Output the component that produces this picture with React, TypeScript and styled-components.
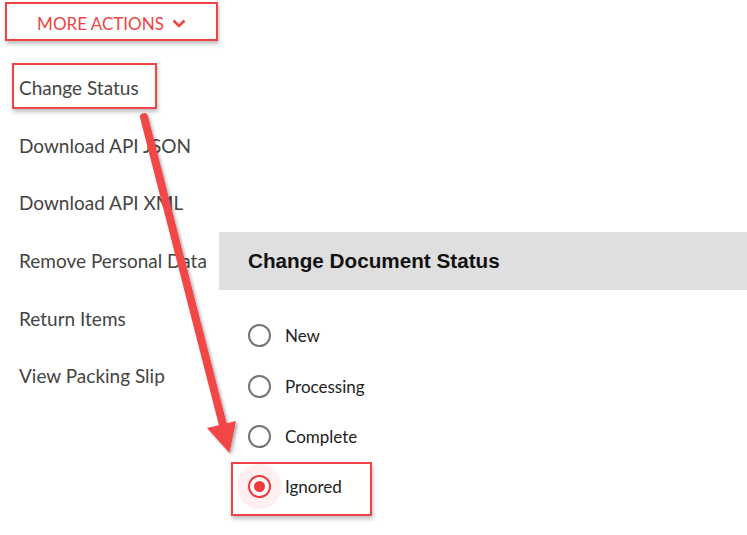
import React from "react";
import styled, { createGlobalStyle } from "styled-components";

const RED = "#f04343";

const Global = createGlobalStyle`
  html, body { margin: 0; padding: 0; background: #fff; }
  body { font-family: Lato, "Noto Sans", sans-serif; }
`;

const Page = styled.div`
  position: relative;
  width: 747px;
  height: 535px;
  overflow: hidden;
  display: flex;
  background: #fff;
`;

const LeftColumn = styled.div`
  width: 219px;
  flex: none;
  display: flex;
  flex-direction: column;
  padding-top: 2px;
`;

const MoreButton = styled.button`
  margin-left: 5px;
  width: 213px;
  height: 39px;
  box-sizing: border-box;
  border: 2px solid ${RED};
  background: #fff;
  box-shadow: 1px 3px 4px rgba(0, 0, 0, 0.25);
  display: flex;
  align-items: center;
  justify-content: center;
  gap: 8px;
  padding: 4px 0 0 0;
  font-family: Lato, sans-serif;
  font-size: 17px;
  color: ${RED};
  cursor: pointer;
`;

const Menu = styled.ul`
  list-style: none;
  margin: 22px 0 0 0;
  padding: 0;
  display: flex;
  flex-direction: column;
  gap: 11.7px;
`;

const MenuItem = styled.li<{ $highlight?: boolean }>`
  margin-left: 12px;
  width: fit-content;
  height: 46px;
  box-sizing: border-box;
  display: flex;
  align-items: center;
  padding: 3px 16px 0 5px;
  border: 2px solid ${(p) => (p.$highlight ? RED : "transparent")};
  box-shadow: ${(p) => (p.$highlight ? "1px 3px 4px rgba(0,0,0,0.25)" : "none")};
  font-size: 19px;
  color: #444;
  white-space: nowrap;
`;

const RightColumn = styled.div`
  flex: 1;
  padding-top: 232px;
  display: flex;
  flex-direction: column;
`;

const DialogHeader = styled.div`
  height: 58px;
  background: #dfdfdf;
  display: flex;
  align-items: center;
  padding-left: 29px;
`;

const DialogTitle = styled.h2`
  margin: 0;
  font-family: "Liberation Sans", Arial, sans-serif;
  font-weight: bold;
  font-size: 20.7px;
  color: #111;
`;

const RadioList = styled.div`
  display: flex;
  flex-direction: column;
  padding-top: 20.7px;
`;

const RadioRow = styled.label<{ $highlight?: boolean }>`
  position: relative;
  height: 50.3px;
  display: flex;
  align-items: center;
  gap: 14px;
  padding-left: 29px;
  font-size: 17px;
  color: #222;

  ${(p) =>
    p.$highlight &&
    `
    &::after {
      content: "";
      position: absolute;
      left: 12px;
      top: 0;
      width: 141px;
      height: 54px;
      box-sizing: border-box;
      border: 2px solid ${RED};
      box-shadow: 1px 3px 4px rgba(0,0,0,0.25);
      pointer-events: none;
    }
  `}
`;

const RadioCircle = styled.span<{ $checked?: boolean }>`
  width: 23px;
  height: 23px;
  box-sizing: border-box;
  border-radius: 50%;
  border: 2px solid ${(p) => (p.$checked ? "#ef3b3b" : "#757575")};
  display: flex;
  align-items: center;
  justify-content: center;
  flex: none;
  box-shadow: ${(p) => (p.$checked ? "0 0 0 11px rgba(240, 60, 60, 0.08)" : "none")};

  &::before {
    content: "";
    width: 11px;
    height: 11px;
    border-radius: 50%;
    background: ${(p) => (p.$checked ? "#ef3b3b" : "transparent")};
  }
`;

const ArrowLayer = styled.svg`
  position: absolute;
  left: 0;
  top: 0;
  pointer-events: none;
`;

const Chevron = () => (
  <svg width="14" height="9" viewBox="0 0 14 9">
    <polyline points="1.5,1.5 7,7 12.5,1.5" fill="none" stroke={RED} strokeWidth="2.6" />
  </svg>
);

const menuItems = [
  "Change Status",
  "Download API JSON",
  "Download API XML",
  "Remove Personal Data",
  "Return Items",
  "View Packing Slip",
];

const statuses = ["New", "Processing", "Complete", "Ignored"];

export default function App() {
  return (
    <>
      <Global />
      <Page>
        <LeftColumn>
          <MoreButton>
            MORE ACTIONS
            <Chevron />
          </MoreButton>
          <Menu>
            {menuItems.map((m, i) => (
              <MenuItem key={m} $highlight={i === 0}>
                {m}
              </MenuItem>
            ))}
          </Menu>
        </LeftColumn>
        <RightColumn>
          <DialogHeader>
            <DialogTitle>Change Document Status</DialogTitle>
          </DialogHeader>
          <RadioList>
            {statuses.map((s) => (
              <RadioRow key={s} $highlight={s === "Ignored"}>
                <RadioCircle $checked={s === "Ignored"} />
                {s}
              </RadioRow>
            ))}
          </RadioList>
        </RightColumn>
        <ArrowLayer width="747" height="535" viewBox="0 0 747 535">
          <defs>
            <filter id="sh" x="-50%" y="-50%" width="200%" height="200%">
              <feDropShadow dx="2" dy="2" stdDeviation="1.8" floodColor="#000" floodOpacity="0.3" />
            </filter>
          </defs>
          <g filter="url(#sh)">
            <line x1="144" y1="117" x2="223" y2="425" stroke="#f14646" strokeWidth="8" strokeLinecap="round" />
            <polygon points="207,428 236,421 229.5,453" fill="#f14646" />
          </g>
        </ArrowLayer>
      </Page>
    </>
  );
}
